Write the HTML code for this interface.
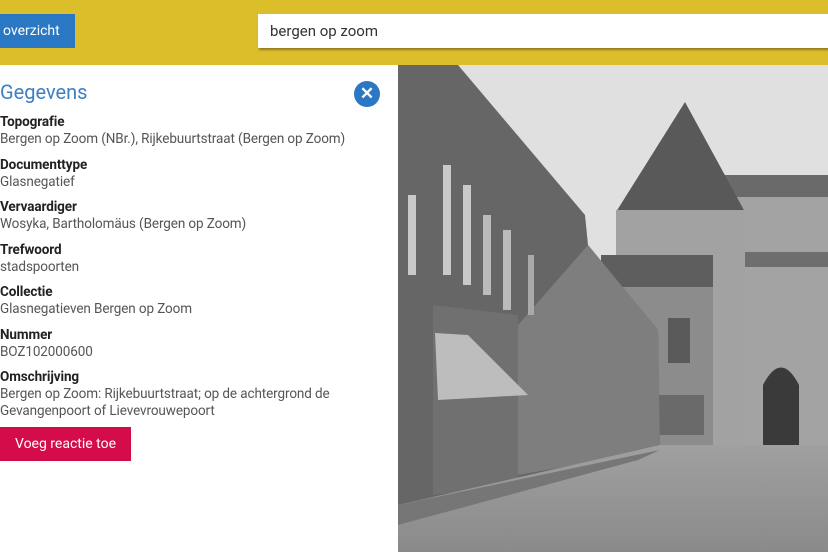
<!DOCTYPE html>
<html><head><meta charset="utf-8"><style>
*{margin:0;padding:0;box-sizing:border-box}
body{width:828px;height:552px;overflow:hidden;background:#fff;font-family:"Roboto","Liberation Sans",sans-serif;position:relative}
.top{position:absolute;left:0;top:0;width:828px;height:65px;background:#dcbe2b}
.btn{position:absolute;left:0;top:14px;width:75px;height:34px;background:#2a78c3;color:#fff;font-size:14px;line-height:34px;padding-left:3px}
.search{position:absolute;left:258px;top:14px;width:570px;height:34px;background:#fff;box-shadow:1px 2px 2px rgba(0,0,0,.35);font-size:15px;color:#333;line-height:34px;padding-left:12px}
h1{position:absolute;left:0;top:79px;font-weight:normal;font-size:20px;color:#3e7fc4;line-height:26px}
.close{position:absolute;left:354px;top:81px;width:26px;height:26px;border-radius:50%;background:#2a78c3;color:#fff;font-size:17px;font-weight:bold;text-align:center;line-height:26px}
.f{position:absolute;left:0;font-size:13.5px;line-height:17px;color:#555;letter-spacing:-.1px}
.f b{display:block;color:#222}
.rb{position:absolute;left:0;top:427px;width:131px;height:34px;background:#d40d4a;color:#fff;font-size:14px;line-height:34px;text-align:center}
svg{position:absolute;left:398px;top:65px}
</style></head><body>
<div class="top"><div class="btn">overzicht</div><div class="search">bergen op zoom</div></div>
<h1>Gegevens</h1><div class="close">✕</div>
<div class="f" style="top:114px"><b>Topografie</b>Bergen op Zoom (NBr.), Rijkebuurtstraat (Bergen op Zoom)</div>
<div class="f" style="top:157px"><b>Documenttype</b>Glasnegatief</div>
<div class="f" style="top:199px"><b>Vervaardiger</b>Wosyka, Bartholomäus (Bergen op Zoom)</div>
<div class="f" style="top:242px"><b>Trefwoord</b>stadspoorten</div>
<div class="f" style="top:284px"><b>Collectie</b>Glasnegatieven Bergen op Zoom</div>
<div class="f" style="top:327px"><b>Nummer</b>BOZ102000600</div>
<div class="f" style="top:369px"><b>Omschrijving</b>Bergen op Zoom: Rijkebuurtstraat; op de achtergrond de<br>Gevangenpoort of Lievevrouwepoort</div>
<div class="rb">Voeg reactie toe</div>
<svg width="430" height="487" viewBox="0 0 430 487">
<defs><linearGradient id="st" x1="0" y1="0" x2="0" y2="1"><stop offset="0" stop-color="#a0a0a0"/><stop offset="1" stop-color="#8a8a8a"/></linearGradient></defs>
<rect width="430" height="487" fill="#e0e0e0"/>
<rect x="323" y="110" width="107" height="275" fill="#a3a3a3"/>
<rect x="323" y="110" width="107" height="22" fill="#6a6a6a"/>
<rect x="345" y="187" width="85" height="15" fill="#6e6e6e"/>
<path d="M365 380 L365 320 Q383 285 401 320 L401 380Z" fill="#3a3a3a"/>
<path d="M287 37 L218 147 L347 147Z" fill="#595959"/>
<rect x="218" y="145" width="129" height="240" fill="#a2a2a2"/>
<rect x="203" y="190" width="112" height="32" fill="#5e5e5e"/>
<rect x="225" y="222" width="90" height="163" fill="#8c8c8c"/>
<rect x="270" y="253" width="22" height="45" fill="#5a5a5a"/>
<rect x="258" y="330" width="48" height="40" fill="#6a6a6a"/>
<path d="M0 0 L60 0 L187 150 L190 180 L260 265 L262 385 L0 440Z" fill="#666"/>
<path d="M120 260 L190 180 L260 265 L262 385 L120 410Z" fill="#7e7e7e"/>
<path d="M35 240 L120 250 L120 420 L35 430Z" fill="#707070"/>
<path d="M37 268 L70 270 L130 330 L40 335Z" fill="#bdbdbd"/>
<rect x="10" y="130" width="8" height="80" fill="#c9c9c9"/><rect x="45" y="100" width="8" height="110" fill="#c9c9c9"/>
<rect x="65" y="120" width="8" height="100" fill="#c9c9c9"/><rect x="85" y="150" width="8" height="80" fill="#bbb"/>
<rect x="105" y="165" width="8" height="80" fill="#bbb"/><rect x="130" y="190" width="6" height="60" fill="#aaa"/>
<path d="M0 440 L262 380 L430 380 L430 487 L0 487Z" fill="url(#st)"/>
<path d="M0 440 L262 385 L240 395 L0 460Z" fill="#767676"/>
</svg>
</body></html>
